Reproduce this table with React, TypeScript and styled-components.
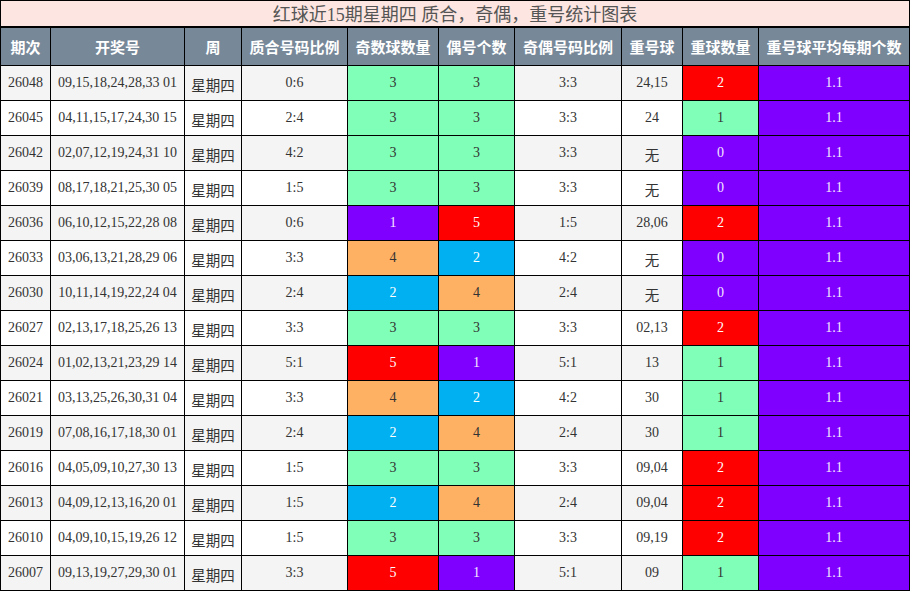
import React from "react";
import styled, { createGlobalStyle, css } from "styled-components";

const GlobalStyle = createGlobalStyle`
  html, body { margin: 0; padding: 0; background: #ffffff; }
  body { font-family: "Liberation Serif", "Noto Sans CJK SC", serif; }
`;

type Tone = "green" | "red" | "purple" | "blue" | "orange";

const toneColors: Record<Tone, { bg: string; fg: string }> = {
  green: { bg: "#80ffb8", fg: "#333333" },
  red: { bg: "#ff0000", fg: "#ffffff" },
  purple: { bg: "#8000ff", fg: "#f4e6ff" },
  blue: { bg: "#00b0f0", fg: "#ffffff" },
  orange: { bg: "#ffb163", fg: "#333333" },
};

const Sheet = styled.div`
  display: grid;
  width: 910px;
  box-sizing: border-box;
  grid-template-columns: 50px 134px 57px 106px 91px 76px 107px 61px 76px 151px;
  grid-template-rows: 27px 38px repeat(15, 35px);
  border-left: 1px solid #000;
  border-top: 1px solid #000;
`;

const TitleCell = styled.div`
  grid-column: 1 / -1;
  box-sizing: border-box;
  background: #fde6e1;
  border-right: 1px solid #000;
  border-bottom: 2px solid #000;
  display: flex;
  align-items: center;
  justify-content: center;
  font-family: "Liberation Serif", "Noto Sans CJK SC", serif;
  font-size: 18px;
  color: #555555;
  padding-bottom: 1px;
`;

const HeadCell = styled.div`
  box-sizing: border-box;
  background: #778899;
  border-right: 1px solid #000;
  border-bottom: 1px solid #000;
  display: flex;
  align-items: center;
  justify-content: center;
  font-family: "Noto Sans CJK SC", sans-serif;
  font-weight: 700;
  font-size: 15px;
  color: #ffffff;
  white-space: nowrap;
`;

const Cell = styled.div<{ $tone?: Tone; $stripe: boolean; $cjk?: boolean }>`
  box-sizing: border-box;
  border-right: 1px solid #000;
  border-bottom: 1px solid #000;
  display: flex;
  align-items: center;
  justify-content: center;
  white-space: nowrap;
  font-family: "Liberation Serif", "Noto Sans CJK SC", serif;
  font-size: 14px;
  color: #333333;
  background: ${(p) => (p.$stripe ? "#f4f4f4" : "#ffffff")};
  ${(p) =>
    p.$cjk &&
    css`
      font-family: "Noto Sans CJK SC", sans-serif;
      font-size: 14.5px;
      padding-top: 2px;
    `}
  ${(p) =>
    p.$tone &&
    css`
      background: ${toneColors[p.$tone].bg};
      color: ${toneColors[p.$tone].fg};
    `}
`;

type Row = {
  id: string;
  nums: string;
  zh: string;
  odd: [string, Tone];
  even: [string, Tone];
  oe: string;
  rep: string;
  repCount: [string, Tone];
};

const G: Tone = "green";
const R: Tone = "red";
const P: Tone = "purple";
const B: Tone = "blue";
const O: Tone = "orange";

const rows: Row[] = [
  { id: "26048", nums: "09,15,18,24,28,33 01", zh: "0:6", odd: ["3", G], even: ["3", G], oe: "3:3", rep: "24,15", repCount: ["2", R] },
  { id: "26045", nums: "04,11,15,17,24,30 15", zh: "2:4", odd: ["3", G], even: ["3", G], oe: "3:3", rep: "24", repCount: ["1", G] },
  { id: "26042", nums: "02,07,12,19,24,31 10", zh: "4:2", odd: ["3", G], even: ["3", G], oe: "3:3", rep: "无", repCount: ["0", P] },
  { id: "26039", nums: "08,17,18,21,25,30 05", zh: "1:5", odd: ["3", G], even: ["3", G], oe: "3:3", rep: "无", repCount: ["0", P] },
  { id: "26036", nums: "06,10,12,15,22,28 08", zh: "0:6", odd: ["1", P], even: ["5", R], oe: "1:5", rep: "28,06", repCount: ["2", R] },
  { id: "26033", nums: "03,06,13,21,28,29 06", zh: "3:3", odd: ["4", O], even: ["2", B], oe: "4:2", rep: "无", repCount: ["0", P] },
  { id: "26030", nums: "10,11,14,19,22,24 04", zh: "2:4", odd: ["2", B], even: ["4", O], oe: "2:4", rep: "无", repCount: ["0", P] },
  { id: "26027", nums: "02,13,17,18,25,26 13", zh: "3:3", odd: ["3", G], even: ["3", G], oe: "3:3", rep: "02,13", repCount: ["2", R] },
  { id: "26024", nums: "01,02,13,21,23,29 14", zh: "5:1", odd: ["5", R], even: ["1", P], oe: "5:1", rep: "13", repCount: ["1", G] },
  { id: "26021", nums: "03,13,25,26,30,31 04", zh: "3:3", odd: ["4", O], even: ["2", B], oe: "4:2", rep: "30", repCount: ["1", G] },
  { id: "26019", nums: "07,08,16,17,18,30 01", zh: "2:4", odd: ["2", B], even: ["4", O], oe: "2:4", rep: "30", repCount: ["1", G] },
  { id: "26016", nums: "04,05,09,10,27,30 13", zh: "1:5", odd: ["3", G], even: ["3", G], oe: "3:3", rep: "09,04", repCount: ["2", R] },
  { id: "26013", nums: "04,09,12,13,16,20 01", zh: "1:5", odd: ["2", B], even: ["4", O], oe: "2:4", rep: "09,04", repCount: ["2", R] },
  { id: "26010", nums: "04,09,10,15,19,26 12", zh: "1:5", odd: ["3", G], even: ["3", G], oe: "3:3", rep: "09,19", repCount: ["2", R] },
  { id: "26007", nums: "09,13,19,27,29,30 01", zh: "3:3", odd: ["5", R], even: ["1", P], oe: "5:1", rep: "09", repCount: ["1", G] },
];

const headers = [
  "期次",
  "开奖号",
  "周",
  "质合号码比例",
  "奇数球数量",
  "偶号个数",
  "奇偶号码比例",
  "重号球",
  "重球数量",
  "重号球平均每期个数",
];

export default function App() {
  return (
    <>
      <GlobalStyle />
      <Sheet>
        <TitleCell>红球近15期星期四 质合，奇偶，重号统计图表</TitleCell>
        {headers.map((h) => (
          <HeadCell key={h}>{h}</HeadCell>
        ))}
        {rows.map((r, i) => {
          const stripe = i % 2 === 0;
          return (
            <React.Fragment key={r.id}>
              <Cell $stripe={stripe}>{r.id}</Cell>
              <Cell $stripe={stripe}>{r.nums}</Cell>
              <Cell $stripe={stripe} $cjk>
                星期四
              </Cell>
              <Cell $stripe={stripe}>{r.zh}</Cell>
              <Cell $stripe={stripe} $tone={r.odd[1]}>
                {r.odd[0]}
              </Cell>
              <Cell $stripe={stripe} $tone={r.even[1]}>
                {r.even[0]}
              </Cell>
              <Cell $stripe={stripe}>{r.oe}</Cell>
              <Cell $stripe={stripe} $cjk={r.rep === "无"}>
                {r.rep}
              </Cell>
              <Cell $stripe={stripe} $tone={r.repCount[1]}>
                {r.repCount[0]}
              </Cell>
              <Cell $stripe={stripe} $tone={P}>
                1.1
              </Cell>
            </React.Fragment>
          );
        })}
      </Sheet>
    </>
  );
}
